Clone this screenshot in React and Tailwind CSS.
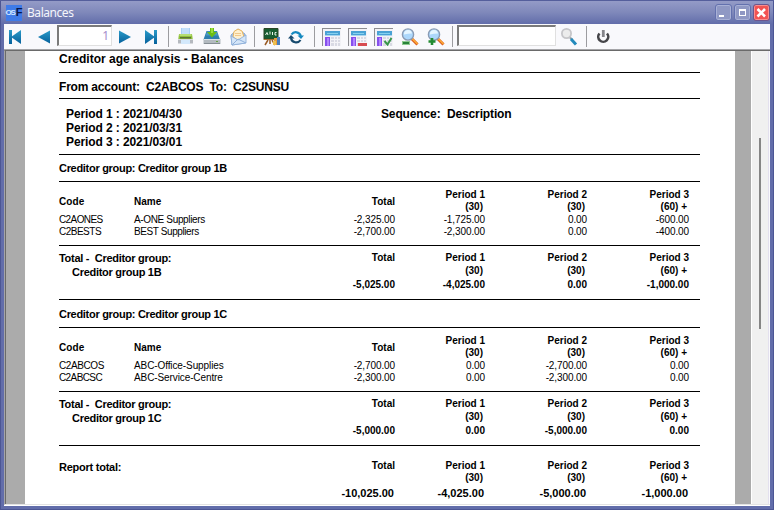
import React from "react";

const Sep = () => <div className="h-[21px] w-px shrink-0 bg-[#9c9ca0]" />;
const Rule = ({ className = "" }) => <div className={"h-px w-[641px] shrink-0 bg-black " + className} />;

function NavIcon({ bar, flip }) {
  return (
    <svg width="14" height="16" viewBox="0 0 14 16" className={flip ? "-scale-x-100" : ""}>
      <defs>
        <linearGradient id="nav" x1="0" y1="0" x2="0" y2="1">
          <stop offset="0" stopColor="#2a9ac8" />
          <stop offset="1" stopColor="#07619c" />
        </linearGradient>
      </defs>
      {bar && <path d="M1 1h3v14H1z" fill="url(#nav)" />}
      <path d={bar ? "M13 1v14L3 8z" : "M13 1.500v13L1 8z"} fill="url(#nav)" />
    </svg>
  );
}

function PrintIcon() {
  return (
    <svg width="18" height="18" viewBox="0 0 18 18">
      <path d="M4 0h9v7H4z" fill="#c3dffa" />
      <path d="M4 0h1v7H4zM12 0h1v7h-1z" fill="#a9cff4" />
      <path d="M2 6h13l1 7H1z" fill="#8fc03a" />
      <path d="M2.500 6h12v2h-12z" fill="#b5dd72" />
      <path d="M3 9h11v1.500H3z" fill="#5c7434" />
      <path d="M1 11h15v4.500H1z" fill="#b5b9bf" />
      <path d="M1 11h15v1H1z" fill="#d9dcdf" />
      <path d="M4 12h9v4H4z" fill="#d3e8fb" />
    </svg>
  );
}

function SaveIcon() {
  return (
    <svg width="18" height="18" viewBox="0 0 18 18">
      <path d="M3.500 3h10.500l3 8.500H.5z" fill="#2f7fae" />
      <path d="M4 3.500h9.500l1.500 4H2.700z" fill="#4a9ac4" />
      <path d="M.5 11h17v5H.5z" fill="#b3bac0" />
      <path d="M1 11h16v1H1z" fill="#dce1e4" />
      <path d="M1 15h16v1H1z" fill="#858d94" />
      <path d="M13 13h2v1h-2z" fill="#63a63f" />
      <path d="M7 0h4v4h3L9 9.500 4 4h3z" fill="#6cbd14" />
      <path d="M8 0h2v5H8z" fill="#9add3e" />
    </svg>
  );
}

function MailIcon() {
  return (
    <svg width="17" height="18" viewBox="0 0 17 18">
      <path d="M1 7l7-6 7 5v9L2 17z" fill="#a8c4e8" stroke="#8aa9d3" />
      <path d="M4 3.500L8 1l4 2 2 6-5 4-6-4z" fill="#fff0cf" stroke="#eab55c" />
      <path d="M5 5.500h6M5 7.500h6" stroke="#f1c98a" />
      <path d="M1 8l7 4 8-5v8L2 17z" fill="#d4e5f8" stroke="#8fb0da" strokeWidth=".9" />
      <path d="M2 17l6-6 8 4" fill="none" stroke="#8fb0da" />
    </svg>
  );
}

function BoardIcon() {
  return (
    <svg width="18" height="18" viewBox="0 0 18 18">
      <path d="M5 12l-3 5M9 12l3 5M7 12v4" stroke="#9a5b25" strokeWidth="1.5" />
      <path d="M1 0.500h14v10.500H1z" fill="#175c31" stroke="#2a4527" />
      <path d="M0.500 11.500h15" stroke="#a46f33" />
      <path d="M2.500 7l1.500-2.500 1 2.500M7 3.500v3M9.500 4v3M13.500 4.500H12v2.500h1.500" fill="none" stroke="#e9f4ea" />
      <path d="M11 10h3v7h-3z" fill="#e39a3d" />
      <path d="M14 9h3v8h-3z" fill="#4a7ebd" />
      <path d="M10 13h3v4h-3z" fill="#f0c14e" />
    </svg>
  );
}

function RefreshIcon() {
  return (
    <svg width="16" height="16" viewBox="0 0 16 16">
      <path d="M3.500 5.500A5.200 5.200 0 0 1 12.800 7" fill="none" stroke="#1488bf" strokeWidth="2.200" />
      <path d="M9.500 6.500H16L13 10z" fill="#1488bf" />
      <path d="M12.500 11A5.200 5.200 0 0 1 3 9" fill="none" stroke="#174a6e" strokeWidth="2.200" />
      <path d="M6.500 9.500H0L3 6z" fill="#174a6e" />
    </svg>
  );
}

function ReportIcon({ kind }) {
  return (
    <svg width="19" height="18" viewBox="0 0 19 18" shapeRendering="crispEdges">
      <path d="M0 0h19v18H0z" fill="#f2f2f6" />
      <path d="M0 0h19v1H1v17H0z" fill="#8d8d92" />
      <path d="M3 3h15v5H3z" fill="#a8d5ee" />
      <path d="M3 3h15v4H3z" fill="#4aa2d5" />
      <path d="M5 5h11v1H5z" fill="#85d1ef" />
      <path d="M3 9h5v9H3z" fill="#8650ed" />
      <path d="M5 10h2v8H5z" fill="#b184ff" />
      <path d="M9 9h9v9H9z" fill="#d9dae4" />
      <path d="M9 11.500h9M9 14.500h9M12.500 9v9M15.500 9v9" stroke="#f4f4f8" />
      {kind === "minus" && <path d="M10 15h9v3h-9z" fill="#d74c51" />}
      {kind === "check" && (
        <path d="M10.500 13l3 3.500L17.500 10" fill="none" stroke="#38964a" strokeWidth="2" shapeRendering="auto" />
      )}
    </svg>
  );
}

function ZoomIcon({ plus }) {
  return (
    <svg width="18" height="18" viewBox="0 0 18 18">
      <path d="M10.500 10.500l6 6" stroke="#d85c20" strokeWidth="3" />
      <path d="M11 10.500l5.500 5.500" stroke="#ffae35" strokeWidth="1.400" />
      <circle cx="7" cy="6.500" r="5.600" fill="#acd7fb" stroke="#8a9bb4" strokeWidth="1.400" />
      <path d="M3 6.500a4 4 0 0 1 8-1q-4 0-8 1" fill="#e5f5ff" />
      {plus ? (
        <path d="M5 10v7M1.500 13.500h7" stroke="#238b31" strokeWidth="2.600" />
      ) : (
        <>
          <path d="M1 13h8v4H1z" fill="#8cc98e" />
          <path d="M2 14h6v2H2z" fill="#28833a" />
        </>
      )}
    </svg>
  );
}

function SearchIcon() {
  return (
    <svg width="17" height="18" viewBox="0 0 17 18">
      <path d="M9 9.500l2 2" stroke="#8c9ba5" strokeWidth="2" />
      <path d="M10 11l5 5.500" stroke="#238abc" strokeWidth="3" />
      <circle cx="5.500" cy="5.500" r="4.600" fill="#ececec" stroke="#c6c6c9" strokeWidth="1.800" />
    </svg>
  );
}

function PowerIcon() {
  return (
    <svg width="14" height="15" viewBox="0 0 14 15">
      <path d="M2.500 4.500a5 5 0 1 0 7.500 0" fill="none" stroke="#454549" strokeWidth="2.600" />
      <path d="M6.300 1v7" stroke="#85858a" strokeWidth="2.800" />
    </svg>
  );
}

const winBtn = "flex h-[17px] w-[17px] items-center justify-center rounded-[3px] border";

function TitleBar() {
  return (
    <div className="flex h-[23px] shrink-0 items-center bg-linear-to-b from-[#949bc7] via-[#7f88ba] to-[#626daa] pl-[5px] pr-[3px]">
      <div className="flex h-4 w-4 items-center justify-center bg-[#3f7be8] font-bold leading-none">
        <span className="text-[8px] tracking-[-1.2px] text-[#d3e8ff]">OS</span>
        <span className="ml-px text-[11px] text-[#081649]">F</span>
      </div>
      <span className="ml-[5px] font-['Noto_Sans','Open_Sans',sans-serif] text-[12px] leading-4 tracking-[-0.45px] text-[#f4f5fb]">
        Balances
      </span>
      <div className="ml-auto flex gap-[2px]">
        <div className={winBtn + " border-[#6371ae] bg-[#8f98c4] shadow-[inset_0_0_0_1px_#a8b0d6]"}>
          <svg width="15" height="15"><path d="M3 10h5v2H3z" fill="#fff" /></svg>
        </div>
        <div className={winBtn + " border-[#6371ae] bg-[#8f98c4] shadow-[inset_0_0_0_1px_#a8b0d6]"}>
          <svg width="15" height="15"><path d="M4 4h7v7H4zM5 6v4h5V6z" fill="#fff" fillRule="evenodd" /></svg>
        </div>
        <div className={winBtn + " border-[#6c558d] bg-[#f25353] shadow-[inset_0_0_0_1px_#fa8d8d]"}>
          <svg width="15" height="15"><path d="M3.500 4l7.500 7.500M11 4l-7.500 7.500" stroke="#fff" strokeWidth="2.600" /></svg>
        </div>
      </div>
    </div>
  );
}

const field = "mb-[2px] border-t-2 border-l-2 border-r border-b border-t-[#7a7a7a] border-l-[#7a7a7a] border-r-[#e0e0e0] border-b-[#e0e0e0] bg-white";

function Toolbar() {
  return (
    <div className="flex h-[25px] shrink-0 items-center bg-[#f9f9fc] pl-[4px]">
      <NavIcon bar />
      <div className="ml-[15px]"><NavIcon /></div>
      <div className={field + " ml-[6px] h-[21px] w-[55px] pr-[2px] text-right font-['Noto_Sans',sans-serif] text-[12px] leading-[18px] text-[#a58ccb]"}>1</div>
      <div className="ml-[6px]"><NavIcon flip /></div>
      <div className="ml-[12px] mr-[10px]"><NavIcon bar flip /></div>
      <Sep />
      <div className="ml-[8px]"><PrintIcon /></div>
      <div className="ml-[8px]"><SaveIcon /></div>
      <div className="ml-[9px] mr-[7px]"><MailIcon /></div>
      <Sep />
      <div className="ml-[8px]"><BoardIcon /></div>
      <div className="ml-[7px] mr-[10px]"><RefreshIcon /></div>
      <Sep />
      <div className="ml-[7px]"><ReportIcon /></div>
      <div className="ml-[7px]"><ReportIcon kind="minus" /></div>
      <div className="ml-[7px]"><ReportIcon kind="check" /></div>
      <div className="ml-[8px]"><ZoomIcon /></div>
      <div className="ml-[8px] mr-[7px]"><ZoomIcon plus /></div>
      <Sep />
      <div className={field + " ml-[4px] h-[21px] w-[99px]"} />
      <div className="ml-[5px] mr-[8px]"><SearchIcon /></div>
      <Sep />
      <div className="ml-[10px]"><PowerIcon /></div>
    </div>
  );
}

const columns = "ml-auto grid w-[446px] grid-cols-[142px_90px_102px_102px] pr-[10px] text-right text-[10px] leading-3 ";

/* Right-aligned figures under the Total and Period columns. */
function Cells({ items, className }) {
  return (
    <div className={columns + className}>
      {items.map((t, i) => <span key={i}>{t}</span>)}
    </div>
  );
}

const periods = ["Total", "Period 1", "Period 2", "Period 3"];

function Days({ className = "" }) {
  return (
    <div className={columns + "font-bold " + className}>
      <span />
      <span className="pr-[2px]">(30)</span>
      <span className="pr-[2px]">(30)</span>
      <span className="pr-[2px]">(60) +</span>
    </div>
  );
}

function Group({ name, heading, rows, totals }) {
  return (
    <>
      <div className={heading + " text-[11px] font-bold leading-4 tracking-[-0.3px]"}>Creditor group: {name}</div>
      <Rule />
      <div className="flex h-8 pt-[7px]">
        <div className="flex pt-[7px] text-[10px] font-bold leading-3">
          <span className="w-[75px] tracking-[0.1px]">Code</span>
          <span>Name</span>
        </div>
        <div className={columns + "font-bold"}>
          <span className="pt-[7px]">Total</span>
          <span>Period 1<br /><span className="pr-[2px]">(30)</span></span>
          <span>Period 2<br /><span className="pr-[2px]">(30)</span></span>
          <span>Period 3<br /><span className="pr-[2px]">(60) +</span></span>
        </div>
      </div>
      {rows.map(([code, codeGap, label, labelGap, ...nums]) => (
        <div key={code} className="flex h-3 text-[10px] leading-3">
          <span className={"w-[75px] " + codeGap}>{code}</span>
          <span className={labelGap}>{label}</span>
          <Cells items={nums} className="tracking-[-0.1px]" />
        </div>
      ))}
      <Rule className="mt-[7px]" />
      <div className="flex h-[53px]">
        <div className="whitespace-pre pt-[5px] text-[11px] font-bold leading-[14px] tracking-[-0.28px]">
          <div>{"Total -  Creditor group:"}</div>
          <div className="pl-[13px]">{name}</div>
        </div>
        <div className="ml-auto pt-[6px]">
          <Cells items={periods} className="font-bold" />
          <Days className="mt-px" />
          <Cells items={totals} className="mt-[2px] font-bold" />
        </div>
      </div>
      <Rule />
    </>
  );
}

function Report() {
  return (
    <div className="w-[710px] shrink-0 overflow-hidden bg-white pl-[34px] text-black">
      <div className="w-[640px]">
        <div className="h-[21px] text-[12px] font-bold leading-4">Creditor age analysis - Balances</div>
        <Rule />
        <div className="h-[25px] whitespace-pre pt-[6px] text-[12px] font-bold leading-4 tracking-[-0.2px]">
          {"From account:  C2ABCOS  To:  C2SUNSU"}
        </div>
        <Rule />
        <div className="flex h-[55px] whitespace-pre pl-[7px] pt-[8px] text-[12px] font-bold leading-[14px]">
          <div className="w-[315px] tracking-[-0.1px]">
            <div>Period 1 : 2021/04/30</div>
            <div>Period 2 : 2021/03/31</div>
            <div>Period 3 : 2021/03/01</div>
          </div>
          <div className="tracking-[-0.13px]">{"Sequence:  Description"}</div>
        </div>
        <Rule />
        <Group
          name="Creditor group 1B"
          heading="h-[26px] pt-[5px]"
          rows={[
            ["C2AONES", "tracking-[-0.6px]", "A-ONE Suppliers", "tracking-[-0.35px]", "-2,325.00", "-1,725.00", "0.00", "-600.00"],
            ["C2BESTS", "tracking-[-0.5px]", "BEST Suppliers", "tracking-[-0.4px]", "-2,700.00", "-2,300.00", "0.00", "-400.00"],
          ]}
          totals={["-5,025.00", "-4,025.00", "0.00", "-1,000.00"]}
        />
        <Group
          name="Creditor group 1C"
          heading="h-[27px] pt-[6px]"
          rows={[
            ["C2ABCOS", "tracking-[-0.4px]", "ABC-Office-Supplies", "tracking-[-0.1px]", "-2,700.00", "0.00", "-2,700.00", "0.00"],
            ["C2ABCSC", "tracking-[-0.6px]", "ABC-Service-Centre", "tracking-[-0.1px]", "-2,300.00", "0.00", "-2,300.00", "0.00"],
          ]}
          totals={["-5,000.00", "0.00", "-5,000.00", "0.00"]}
        />
        <div className="flex">
          <span className="pt-[13px] text-[11px] font-bold leading-4 tracking-[-0.25px]">Report total:</span>
          <div className="ml-auto pt-[14px]">
            <Cells items={periods} className="font-bold" />
            <Days />
            <Cells items={["-10,025.00", "-4,025.00", "-5,000.00", "-1,000.00"]} className="relative right-px mt-[3px] text-[11px]! font-bold" />
          </div>
        </div>
      </div>
    </div>
  );
}

export default function App() {
  return (
    <div className="flex h-[510px] w-[774px] flex-col overflow-hidden border-t border-[#555f9c] bg-[#626daa] font-['Liberation_Sans',Arial,sans-serif]">
      <div className="flex min-h-0 flex-1 flex-col border-l border-r border-b border-[#4c5694]">
        <TitleBar />
        <div className="mx-[3px] mb-[3px] flex min-h-0 flex-1 flex-col bg-[#f9f9fc]">
          <Toolbar />
          <div className="h-px shrink-0 bg-[#a5a5a8]" />
          <div className="flex min-h-0 flex-1 border-b border-[#e3e3e3] border-l border-l-[#a5a5a8] border-t border-t-[#6a6a6a]">
            <div className="w-[20px] shrink-0 border-l border-[#6a6a6a] bg-[#ababab]" />
            <Report />
            <div className="w-4 shrink-0 bg-[#ababab]" />
            <div className="w-px shrink-0 bg-white" />
            <div className="w-4 shrink-0 bg-[#f0f0f0] pl-[7px] pt-[87px]">
              <div className="h-[191px] w-[2px] bg-[#858585]" />
            </div>
            <div className="w-px shrink-0 bg-[#e3e0ee]" />
          </div>
          <div className="h-px shrink-0 bg-white" />
        </div>
      </div>
    </div>
  );
}
